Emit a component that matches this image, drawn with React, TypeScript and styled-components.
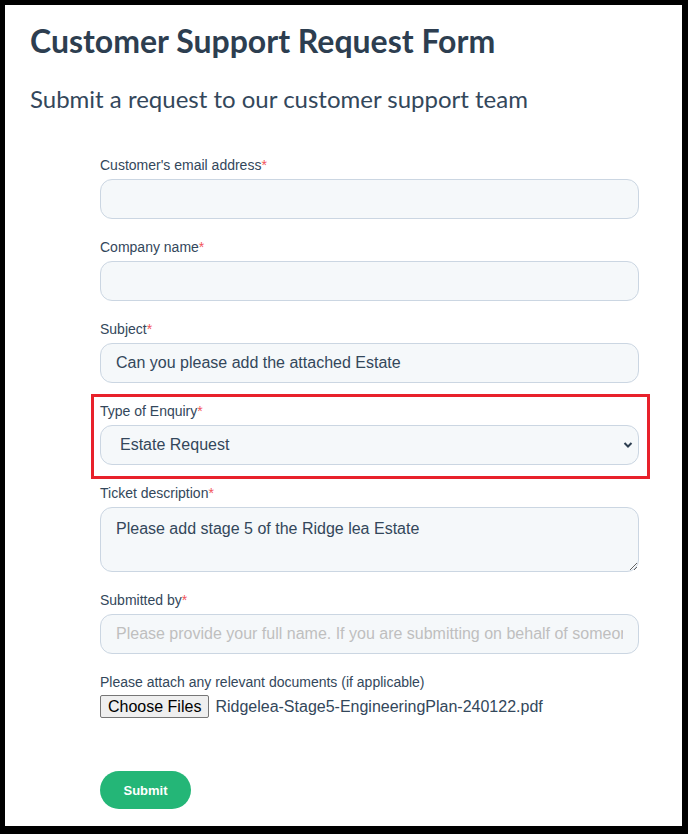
import React from 'react'
import styled, { createGlobalStyle } from 'styled-components'

const Global = createGlobalStyle`
  html, body {
    margin: 0;
    padding: 0;
    background: #000;
  }
  * { box-sizing: border-box; }
`

const Frame = styled.div`
  padding: 5px 6px 8px 5px;
  background: #000;
  min-height: 834px;
`

const Sheet = styled.div`
  background: #fff;
  height: 821px;
  padding: 16px 0 0 25px;
  overflow: hidden;
`

const Title = styled.h1`
  margin: 0;
  font-family: 'Lato', 'Open Sans', sans-serif;
  font-weight: 700;
  font-size: 32px;
  line-height: 40px;
  color: #2d3e50;
`

const Subtitle = styled.h2`
  margin: 23px 0 0;
  font-family: 'Lato', 'Open Sans', sans-serif;
  font-weight: 400;
  font-size: 24px;
  line-height: 30px;
  color: #33475b;
`

const Form = styled.form`
  width: 539px;
  margin: 42px 0 0 70px;
  font-family: 'Liberation Sans', Arial, sans-serif;
`

const Field = styled.div<{ $marked?: boolean }>`
  position: relative;
  margin-bottom: 19px;
  ${p => p.$marked && `
    &::after {
      content: '';
      position: absolute;
      left: -9px;
      right: -11px;
      top: -8px;
      bottom: -14px;
      border: 3px solid #e8212b;
      pointer-events: none;
    }
  `}
`

const Label = styled.label`
  display: block;
  font-size: 14px;
  line-height: 18px;
  color: #33475b;
  margin-bottom: 5px;
`

const Req = styled.span`
  color: #f2545b;
`

const Input = styled.input`
  display: block;
  width: 100%;
  height: 40px;
  padding: 0 15px;
  font-family: inherit;
  font-size: 16px;
  color: #33475b;
  background: #f5f8fa;
  border: 1px solid #cbd6e2;
  border-radius: 12px;
  outline: none;
  &::placeholder { color: #bfbfbf; }
`

const SelectBox = styled.div`
  position: relative;
  height: 40px;
  display: flex;
  align-items: center;
  padding: 0 19px;
  font-size: 16px;
  color: #33475b;
  background: #f5f8fa;
  border: 1px solid #cbd6e2;
  border-radius: 12px;
`

const Chevron = styled.svg`
  position: absolute;
  right: 5px;
  top: 15px;
`

const TextArea = styled.textarea`
  display: block;
  width: 100%;
  height: 65px;
  padding: 11px 15px;
  font-family: inherit;
  font-size: 16px;
  line-height: 20px;
  color: #33475b;
  background: #f5f8fa;
  border: 1px solid #cbd6e2;
  border-radius: 12px;
  resize: vertical;
  outline: none;
`

const FileRow = styled.div`
  display: flex;
  align-items: center;
  gap: 6px;
  margin-top: -1px;
`

const FileButton = styled.button`
  font-family: inherit;
  font-size: 16px;
  height: 23px;
  padding: 0 7px;
  color: #000;
  background: #efefef;
  border: 1px solid #767676;
  border-radius: 2px;
`

const FileName = styled.span`
  font-size: 16px;
  color: #33475b;
`

const Submit = styled.button`
  margin-top: 34px;
  width: 91px;
  height: 38px;
  border: none;
  border-radius: 19px;
  background: #24b677;
  color: #fff;
  font-family: inherit;
  font-size: 13px;
  font-weight: 700;
`

const App = () => {
  return (
    <Frame>
      <Global />
      <Sheet>
        <Title>Customer Support Request Form</Title>
        <Subtitle>Submit a request to our customer support team</Subtitle>
        <Form onSubmit={e => e.preventDefault()}>
          <Field>
            <Label>Customer's email address<Req>*</Req></Label>
            <Input type="email" />
          </Field>
          <Field>
            <Label>Company name<Req>*</Req></Label>
            <Input />
          </Field>
          <Field>
            <Label>Subject<Req>*</Req></Label>
            <Input defaultValue="Can you please add the attached Estate" />
          </Field>
          <Field $marked>
            <Label>Type of Enquiry<Req>*</Req></Label>
            <SelectBox>
              Estate Request
              <Chevron width="10" height="8" viewBox="0 0 10 8">
                <path d="M1.5 2 L5 5.5 L8.5 2" fill="none" stroke="#2d3e50" strokeWidth="2" />
              </Chevron>
            </SelectBox>
          </Field>
          <Field>
            <Label>Ticket description<Req>*</Req></Label>
            <TextArea defaultValue="Please add stage 5 of the Ridge lea Estate" />
          </Field>
          <Field>
            <Label>Submitted by<Req>*</Req></Label>
            <Input placeholder="Please provide your full name. If you are submitting on behalf of someone else, please include their name too" />
          </Field>
          <Field>
            <Label>Please attach any relevant documents (if applicable)</Label>
            <FileRow>
              <FileButton type="button">Choose Files</FileButton>
              <FileName>Ridgelea-Stage5-EngineeringPlan-240122.pdf</FileName>
            </FileRow>
          </Field>
          <Submit type="submit">Submit</Submit>
        </Form>
      </Sheet>
    </Frame>
  )
}

export default App
